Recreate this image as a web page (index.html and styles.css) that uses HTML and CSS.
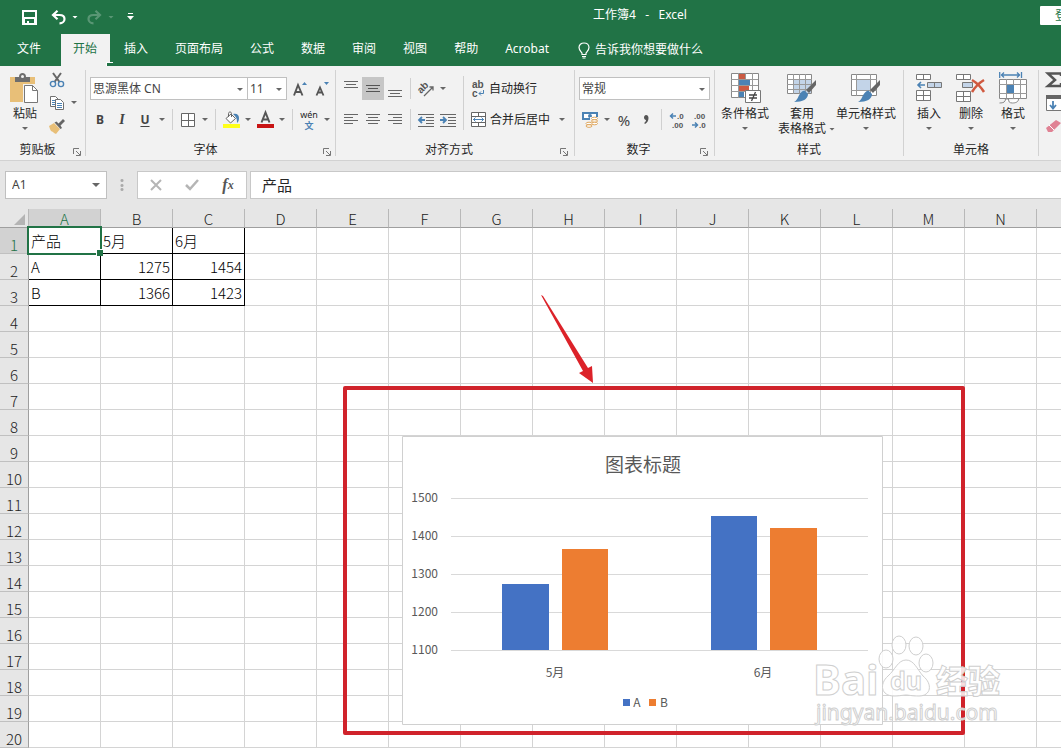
FILE: index.html
```html
<!DOCTYPE html>
<html lang="zh-CN">
<head>
<meta charset="utf-8">
<title>工作簿4 - Excel</title>
<link rel="stylesheet" href="styles.css">
</head>
<body>
<header class="titlebar">
  <div class="quick">
    <button class="qbtn" aria-label="保存"><svg width="15" height="15" viewBox="0 0 15 15"><path fill="#fff" fill-rule="evenodd" d="M0 0h15v15H0zM2 2v5h11V2zM3 9v4h2v-2h2v2h5V9z"/></svg></button>
    <button class="qbtn" aria-label="撤消"><svg width="15" height="15" viewBox="0 0 15 15"><path fill="none" stroke="#fff" stroke-width="2.2" d="M6.500 0.800L2 5l4.500 4.200M2 5h6.500c3 0 5 1.600 5 4s-2 4.300-5 4.300"/></svg></button>
    <button class="caret light" aria-label="撤消列表"></button>
    <button class="qbtn faded" aria-label="恢复"><svg width="15" height="15" viewBox="0 0 15 15"><path fill="none" stroke="#fff" stroke-width="2.200" d="M8.500 0.800L13 5l-4.500 4.200M13 5H6.500c-3 0-5 1.600-5 4s2 4.300 5 4.300"/></svg></button>
    <button class="caret light faded" aria-label="恢复列表"></button>
    <button class="qbtn" aria-label="自定义快速访问工具栏"><svg width="7" height="8" viewBox="0 0 7 8"><path fill="#fff" d="M1 0h5v1H1zM0 3h7L3.500 7z"/></svg></button>
  </div>
  <div class="doc-title">工作簿4 &nbsp;&nbsp;- &nbsp;&nbsp;Excel</div>
  <button class="login">登录</button>
</header>
<nav class="tabs">
  <button class="tab file">文件</button><button class="tab active">开始</button><button class="tab">插入</button><button class="tab">页面布局</button><button class="tab">公式</button><button class="tab">数据</button><button class="tab">审阅</button><button class="tab">视图</button><button class="tab">帮助</button><button class="tab">Acrobat</button>
  <button class="tell"><svg width="12" height="17" viewBox="0 0 12 17"><path fill="none" stroke="#fff" stroke-width="1.200" d="M4 12.500V11C2.500 9 1 7.800 1 5.500 1 3 3 1 6 1s5 2 5 4.500C11 7.800 9.500 9 8 11v1.500zM4 14.500h4M4.500 16h3"/></svg>告诉我你想要做什么</button>
</nav>

<section class="ribbon" aria-label="开始">
  <div class="group snug">
    <div class="body">
      <button class="big paste"><span class="pic"><svg width="30" height="32" viewBox="0 0 30 32"><path fill="#e8bf78" d="M0 5h25v25H0z"/><path fill="#6d6d6d" d="M5 10V5h4c0-3 1.500-4 3.500-4S16 2 16 5h4v5z"/><circle cx="12.500" cy="4.500" r="1.500" fill="#f2f2f2"/><path fill="#f2f2f2" d="M13 12h17v20H13z"/><path fill="#fff" stroke="#777" d="M14.500 13.500h8l5 5v12h-13z"/><path fill="none" stroke="#777" d="M22.500 13.500v5h5"/></svg></span>粘贴<span class="tri"></span></button>
      <div class="mini">
        <button class="ib" aria-label="剪切"><svg width="16" height="16" viewBox="0 0 16 16"><path fill="none" stroke="#666" stroke-width="2" d="M4 1l6.500 9M12 1L5.500 10"/><circle cx="4" cy="12" r="2.600" fill="none" stroke="#4b82b4" stroke-width="1.400"/><circle cx="12" cy="12" r="2.600" fill="none" stroke="#4b82b4" stroke-width="1.400"/></svg></button>
        <span class="row tight"><button class="ib" aria-label="复制"><svg width="16" height="16" viewBox="0 0 16 16"><path fill="#fff" stroke="#707070" d="M1.500 1.500h5l3 3v7h-8z"/><path stroke="#4b82b4" d="M3 5.500h4M3 7.500h4M3 9.500h4"/><path fill="#fff" stroke="#707070" d="M6.500 4.500h5l3 3v7h-8z"/><path stroke="#4b82b4" d="M8 8.500h5M8 10.500h5M8 12.500h5"/></svg></button><button class="caret" aria-label="复制选项"></button></span>
        <button class="ib" aria-label="格式刷"><svg width="16" height="16" viewBox="0 0 16 16"><path fill="#e8bf78" d="M0 8l5-3 6 6-4 5-2-1-1-1-2-1-1-2z"/><path fill="#666" d="M5.500 4.500l2-1 2 2L14 1l2 2-4.500 4.500 1.500 2.500-1.500 1z"/></svg></button>
      </div>
    </div>
    <div class="foot"><span>剪贴板</span><button class="launch" aria-label="剪贴板设置"><svg width="8" height="8" viewBox="0 0 8 8"><path fill="none" stroke="#777" d="M.5 6V.5H6M3 3l4 4M7.500 3v4.500H3"/></svg></button></div>
  </div>

  <div class="group snug">
    <div class="body stack">
      <div class="row">
        <label class="combo font-name"><select aria-label="字体"><option>思源黑体 CN</option></select></label><label class="combo font-size"><select aria-label="字号"><option>11</option></select></label>
        <button class="ib" aria-label="增大字号"><svg width="14" height="16" viewBox="0 0 14 16"><path fill="none" stroke="#555" stroke-width="1.900" d="M1 14.500L5 4 9.500 14.500M2.500 11h5.500"/><path fill="#4b82b4" d="M9 4l2.500-3L14 4z"/></svg></button><button class="ib" aria-label="减小字号"><svg width="14" height="16" viewBox="0 0 14 16"><path fill="none" stroke="#555" stroke-width="1.800" d="M1.500 14.500L5 6.500l3.500 8M3 11.500h4"/><path fill="#4b82b4" d="M9 1h5l-2.500 3z"/></svg></button>
      </div>
      <div class="row">
        <button class="ib n20 b">B</button><button class="ib n24 i">I</button><button class="ib u">U</button><button class="caret" aria-label="下划线选项"></button><i class="sep"></i>
        <button class="ib" aria-label="边框"><svg width="14" height="14" viewBox="0 0 14 14"><path fill="#fff" stroke="#666" d="M.5.5h13v13H.5zM7.500 0v14M0 7.500h14"/></svg></button><button class="caret" aria-label="边框选项"></button><i class="sep"></i>
        <button class="ib" aria-label="填充颜色"><svg width="17" height="17" viewBox="0 0 17 17"><path fill="#ffff1a" d="M0 13h17v4H0z"/><path fill="#fff" stroke="#666" d="M3 7.500L8 3l4.500 4.500L7.500 12z"/><path fill="none" stroke="#666" d="M5.500 6V2.500c0-2 3-2 3 0V6"/><path fill="#4b82b4" d="M10 3c4-1 6 1 6 4s-1 4-2 5c0-4 0-5-4-9z"/></svg></button><button class="caret" aria-label="填充颜色选项"></button>
        <button class="ib" aria-label="字体颜色"><svg width="17" height="17" viewBox="0 0 17 17"><path fill="#c81414" d="M0 13h17v4H0z"/><path fill="none" stroke="#555" stroke-width="2" d="M4.500 11.500l4-10 4 10M5.500 8.500h6"/></svg></button><button class="caret" aria-label="字体颜色选项"></button><i class="sep"></i>
        <button class="ib n24 pinyin" aria-label="拼音指南"><span>wén</span><b>文</b></button><button class="caret" aria-label="拼音选项"></button>
      </div>
    </div>
    <div class="foot"><span>字体</span><button class="launch" aria-label="字体设置"><svg width="8" height="8" viewBox="0 0 8 8"><path fill="none" stroke="#777" d="M.5 6V.5H6M3 3l4 4M7.500 3v4.500H3"/></svg></button></div>
  </div>

  <div class="group">
    <div class="body">
      <div class="stack">
        <div class="row">
          <button class="ib" aria-label="顶端对齐"><svg width="14" height="16" viewBox="0 0 14 16"><path stroke="#666" d="M0 .5h14M2 3.500h10M0 6.500h14"/></svg></button><button class="ib on" aria-label="垂直居中"><svg width="14" height="16" viewBox="0 0 14 16"><path stroke="#555" d="M0 4.500h14M2 7.500h10M0 10.500h14"/></svg></button><button class="ib" aria-label="底端对齐"><svg width="14" height="16" viewBox="0 0 14 16"><path stroke="#666" d="M0 9.500h14M2 12.500h10M0 15.500h14"/></svg></button><i class="sep"></i><button class="ib" aria-label="方向"><svg width="17" height="16" viewBox="0 0 17 16"><text class="glyph" x="0" y="10" transform="rotate(-45 5 8)">ab</text><path fill="none" stroke="#666" stroke-width="1.300" d="M6 15l9-9M11.500 6H15v3.500"/></svg></button><button class="caret" aria-label="方向选项"></button>
        </div>
        <div class="row">
          <button class="ib" aria-label="左对齐"><svg width="14" height="12" viewBox="0 0 14 12"><path stroke="#666" d="M0 .5h14M0 3.500h9M0 6.500h14M0 9.500h9"/></svg></button><button class="ib" aria-label="居中"><svg width="14" height="12" viewBox="0 0 14 12"><path stroke="#666" d="M0 .5h14M2 3.500h10M0 6.500h14M2 9.500h10"/></svg></button><button class="ib" aria-label="右对齐"><svg width="14" height="12" viewBox="0 0 14 12"><path stroke="#666" d="M0 .5h14M5 3.500h9M0 6.500h14M5 9.500h9"/></svg></button><i class="sep"></i><button class="ib" aria-label="减少缩进量"><svg width="16" height="14" viewBox="0 0 16 14"><path stroke="#666" d="M0 1.500h16M8 4.500h8M8 7.500h8M8 10.500h8M0 13.500h16"/><path fill="none" stroke="#4b82b4" stroke-width="1.800" d="M7 7H1M4 4L1 7l3 3"/></svg></button><button class="ib" aria-label="增加缩进量"><svg width="16" height="14" viewBox="0 0 16 14"><path stroke="#666" d="M0 1.500h16M8 4.500h8M8 7.500h8M8 10.500h8M0 13.500h16"/><path fill="none" stroke="#4b82b4" stroke-width="1.800" d="M0 7h6M3 4l3 3-3 3"/></svg></button>
        </div>
      </div>
      <i class="sep tall"></i>
      <div class="stack wrap-merge">
        <div class="row"><button class="wide"><svg width="14" height="18" viewBox="0 0 14 18"><text class="glyph" x="1" y="8">ab</text><text class="glyph" x="1" y="17">c</text><path fill="none" stroke="#4b82b4" d="M12.500 10v3.500H8M10 11.500l-2 2 2 2"/></svg>自动换行</button></div>
        <div class="row"><button class="wide"><svg width="15" height="15" viewBox="0 0 15 15"><path fill="#fff" stroke="#666" d="M.5.5h14v14H.5z"/><path fill="none" stroke="#666" d="M0 4.500h15M0 10.500h15M7.500 0v4M7.500 11v4"/><path fill="none" stroke="#4b82b4" d="M2 7.500h11M4.500 5.500l-2 2 2 2M10.500 5.500l2 2-2 2"/></svg>合并后居中</button><button class="caret spaced" aria-label="合并选项"></button></div>
      </div>
    </div>
    <div class="foot"><span>对齐方式</span><button class="launch" aria-label="对齐设置"><svg width="8" height="8" viewBox="0 0 8 8"><path fill="none" stroke="#777" d="M.5 6V.5H6M3 3l4 4M7.500 3v4.500H3"/></svg></button></div>
  </div>

  <div class="group">
    <div class="body stack">
      <div class="row"><label class="combo number"><select aria-label="数字格式"><option>常规</option></select></label></div>
      <div class="row">
        <button class="ib" aria-label="会计数字格式"><svg width="17" height="17" viewBox="0 0 17 17"><path fill="#4b82b4" d="M0 1h16v8H0z"/><path fill="#fff" d="M2 3h12v4H2z"/><circle cx="8" cy="5" r="2" fill="#4b82b4"/><path fill="#f2f2f2" d="M8 6h8v4H8zM3 10h12v7H3z"/><g fill="#fff" stroke="#dfa65c"><ellipse cx="12.500" cy="7.500" rx="3" ry="1.300"/><ellipse cx="12.500" cy="10" rx="3" ry="1.300"/><ellipse cx="12.500" cy="12.500" rx="3" ry="1.300"/><ellipse cx="7" cy="12.500" rx="3" ry="1.300"/><ellipse cx="7" cy="15" rx="3" ry="1.300"/></g></svg></button><button class="caret" aria-label="会计格式选项"></button><button class="ib pct">%</button><button class="ib" aria-label="千位分隔样式"><svg width="6" height="9" viewBox="0 0 6 9"><path fill="#555" d="M1 2.500C1 1 2 0 3 0c1.500 0 2.500 1 2.500 3 0 3-1.500 5-3.500 6l-.8-1C2.500 7 3 6 3 5 2 5 1 4 1 2.500z"/></svg></button><i class="sep"></i><button class="ib" aria-label="增加小数位数"><svg width="16" height="16" viewBox="0 0 16 16"><text class="dec" x="8" y="7">.0</text><text class="dec" x="3" y="16">.00</text><path fill="none" stroke="#4b82b4" stroke-width="1.500" d="M7 4H1.500M4 1.500L1.500 4 4 6.500"/></svg></button><button class="ib" aria-label="减少小数位数"><svg width="16" height="16" viewBox="0 0 16 16"><text class="dec" x="3" y="7">.00</text><text class="dec" x="8" y="16">.0</text><path fill="none" stroke="#4b82b4" stroke-width="1.500" d="M1 13h5.500M4 10.500L6.500 13 4 15.500"/></svg></button>
      </div>
    </div>
    <div class="foot"><span>数字</span><button class="launch" aria-label="数字设置"><svg width="8" height="8" viewBox="0 0 8 8"><path fill="none" stroke="#777" d="M.5 6V.5H6M3 3l4 4M7.500 3v4.500H3"/></svg></button></div>
  </div>

  <div class="group">
    <div class="body">
      <button class="big w52"><span class="pic"><svg width="31" height="31" viewBox="0 0 31 31"><path fill="#fff" stroke="#888" d="M1.500.5h27v24h-27z"/><path fill="none" stroke="#999" d="M1 6.500h27M1 12.500h27M1 18.500h27M8.500 0v25M15.500 0v25M22.500 0v25"/><path fill="#cb5a42" d="M9 1h6v5H9zM9 13h10v5H9z"/><path fill="#4b82b4" d="M9 7h11v5H9zM9 19h5v5H9z"/><path fill="#fff" stroke="#777" d="M15.500 17.500h15v12h-15z"/><path fill="none" stroke="#444" stroke-width="1.300" d="M19 22h8M19 25h8M25.500 19l-4 9"/></svg></span>条件格式<span class="tri"></span></button>
      <button class="big w62"><span class="pic"><svg width="30" height="29" viewBox="0 0 30 29"><path fill="#fff" stroke="#888" d="M.5.500h24v19H.5z"/><path fill="#c3d4e8" d="M7 5h17v14H7z"/><path fill="none" stroke="#999" d="M0 5.500h25M0 10.500h25M0 15.500h25M6.500 0v20M12.500 0v20M18.500 0v20"/><path fill="#666" d="M29 6v5l-7 8-3-3z"/><path fill="#4b82b4" d="M17.500 16.500l3.500 3.500c0 5-5 8-14 8 5-2 4-10 10.500-11.500z"/></svg></span>套用<span class="line2">表格格式<span class="tri side"></span></span></button>
      <button class="big w66"><span class="pic"><svg width="30" height="29" viewBox="0 0 30 29"><path fill="#fff" stroke="#888" d="M.5.500h25v21H.5z"/><path fill="none" stroke="#999" d="M0 5.500h26M0 16.500h26M5.500 0v22M19.500 0v22"/><path fill="#c3d4e8" d="M6 6h13v10H6z"/><path fill="#666" d="M29 6v5l-7 8-3-3z"/><path fill="#4b82b4" d="M17.500 16.500l3.500 3.500c0 5-5 8-14 8 5-2 4-10 10.500-11.500z"/></svg></span>单元格样式<span class="tri"></span></button>
    </div>
    <div class="foot"><span>样式</span></div>
  </div>

  <div class="group">
    <div class="body">
      <button class="big w42"><span class="pic"><svg width="27" height="28" viewBox="0 0 27 28"><path fill="#fff" stroke="#777" d="M.5.500h14v5H.5zM7.500.5v5M.5 16.500h14v10H.5zM7.500 16.500v10M.5 21.500h14"/><path fill="#c3d4e8" stroke="#777" d="M11.500 8.500h14v5h-14zM18.500 8.500v5"/><path fill="none" stroke="#4b82b4" stroke-width="1.600" d="M9 11H2M5 8l-3 3 3 3"/></svg></span>插入<span class="tri"></span></button>
      <button class="big w42"><span class="pic"><svg width="30" height="28" viewBox="0 0 30 28"><path fill="#fff" stroke="#777" d="M.5.500h14v5H.5zM7.500.5v5M.5 17.500h14v10H.5zM7.500 17.500v10M.5 22.500h14"/><path fill="#c3d4e8" stroke="#777" d="M6.500 8.500h10v5h-10z"/><path fill="none" stroke="#d0593f" stroke-width="2.500" d="M16 6c5 3 9 7 12 12M28 6c-5 3-9 7-12 12"/></svg></span>删除<span class="tri"></span></button>
      <button class="big w42"><span class="pic"><svg width="28" height="32" viewBox="0 0 28 32"><path fill="none" stroke="#4b82b4" stroke-width="1.300" d="M.7 0v6M22.500 0v6M2 3h19M5 .5L2.500 3 5 5.500M18 .5L20.500 3 18 5.500"/><path fill="#fff" stroke="#888" d="M.5 7.500h27v19H.5z"/><path fill="none" stroke="#999" d="M0 12.500h28M0 21.500h28M7.500 7v20M14.500 7v20M21.500 7v20"/><path fill="#4b82b4" d="M8 13h7v8H8z"/><path fill="#fff" stroke="#888" d="M.5 31c4 0 6-1 6-4h3c0 3 1 4 4 4s6-1 6-4"/></svg></span>格式<span class="tri"></span></button>
    </div>
    <div class="foot"><span>单元格</span></div>
  </div>

  <div class="group last">
    <div class="mini">
      <button class="ib" aria-label="自动求和"><svg width="16" height="16" viewBox="0 0 16 16"><path fill="none" stroke="#555" stroke-width="2.500" d="M15 4V1.500H2L9 8l-7 6h13v-3"/></svg></button>
      <button class="ib" aria-label="填充"><svg width="16" height="16" viewBox="0 0 16 16"><path fill="#fff" stroke="#777" d="M.5.500h15v15H.5z"/><path fill="#666" d="M0 0h16v4H0z"/><path fill="none" stroke="#4b82b4" stroke-width="1.800" d="M7 6v7M4 10l3 3.500 3-3.500"/></svg></button>
      <button class="ib" aria-label="清除"><svg width="16" height="16" viewBox="0 0 16 16"><path fill="#e08294" d="M0 10L10 2l5 3-9 9H2z"/><path stroke="#fff" d="M3 7l5 5"/></svg></button>
    </div>
  </div>
</section>

<section class="formula-bar">
  <label class="combo name-box"><input aria-label="名称框" value="A1"></label>
  <span class="dots"></span>
  <div class="fx-box">
    <button aria-label="取消"><svg width="12" height="12" viewBox="0 0 12 12"><path stroke="#b5b5b5" stroke-width="2" d="M1 1l10 10M11 1L1 11"/></svg></button>
    <button aria-label="输入"><svg width="14" height="12" viewBox="0 0 14 12"><path fill="none" stroke="#b5b5b5" stroke-width="2.500" d="M1 6l4 4 8-9"/></svg></button>
    <button class="fx" aria-label="插入函数">f<sub>x</sub></button>
  </div>
  <input class="formula" aria-label="编辑栏" value="产品">
</section>

<main class="sheet">
  <table class="grid">
    <colgroup><col class="rowhead"><col span="15"></colgroup>
    <thead><tr><th class="corner"><svg width="11" height="11" viewBox="0 0 11 11"><path fill="#b4b4b4" d="M11 0v11H0z"/></svg></th><th class="sel">A</th><th>B</th><th>C</th><th>D</th><th>E</th><th>F</th><th>G</th><th>H</th><th>I</th><th>J</th><th>K</th><th>L</th><th>M</th><th>N</th><th>O</th></tr></thead>
    <tbody>
      <tr><th class="sel">1</th><td class="d active">产品</td><td class="d">5月</td><td class="d">6月</td><td><td><td><td><td><td><td><td><td><td><td><td></tr>
      <tr><th>2</th><td class="d">A</td><td class="d num">1275</td><td class="d num">1454</td><td><td><td><td><td><td><td><td><td><td><td><td></tr>
      <tr><th>3</th><td class="d">B</td><td class="d num">1366</td><td class="d num">1423</td><td><td><td><td><td><td><td><td><td><td><td><td></tr>
      <tr><th>4</th><td><td><td><td><td><td><td><td><td><td><td><td><td><td><td></tr>
      <tr><th>5</th><td><td><td><td><td><td><td><td><td><td><td><td><td><td><td></tr>
      <tr><th>6</th><td><td><td><td><td><td><td><td><td><td><td><td><td><td><td></tr>
      <tr><th>7</th><td><td><td><td><td><td><td><td><td><td><td><td><td><td><td></tr>
      <tr><th>8</th><td><td><td><td><td><td><td><td><td><td><td><td><td><td><td></tr>
      <tr><th>9</th><td><td><td><td><td><td><td><td><td><td><td><td><td><td><td></tr>
      <tr><th>10</th><td><td><td><td><td><td><td><td><td><td><td><td><td><td><td></tr>
      <tr><th>11</th><td><td><td><td><td><td><td><td><td><td><td><td><td><td><td></tr>
      <tr><th>12</th><td><td><td><td><td><td><td><td><td><td><td><td><td><td><td></tr>
      <tr><th>13</th><td><td><td><td><td><td><td><td><td><td><td><td><td><td><td></tr>
      <tr><th>14</th><td><td><td><td><td><td><td><td><td><td><td><td><td><td><td></tr>
      <tr><th>15</th><td><td><td><td><td><td><td><td><td><td><td><td><td><td><td></tr>
      <tr><th>16</th><td><td><td><td><td><td><td><td><td><td><td><td><td><td><td></tr>
      <tr><th>17</th><td><td><td><td><td><td><td><td><td><td><td><td><td><td><td></tr>
      <tr><th>18</th><td><td><td><td><td><td><td><td><td><td><td><td><td><td><td></tr>
      <tr><th>19</th><td><td><td><td><td><td><td><td><td><td><td><td><td><td><td></tr>
      <tr><th>20</th><td><td><td><td><td><td><td><td><td><td><td><td><td><td><td></tr>
    </tbody>
  </table>

  <svg class="chart" width="481" height="289" viewBox="0 0 481 289" role="img" aria-label="图表标题">
    <path fill="#fff" stroke="#d0d0d0" d="M.5.500h480v288H.5z"/>
    <text class="ct" x="241" y="36" text-anchor="middle">图表标题</text>
    <path stroke="#d9d9d9" d="M49 62.500h417M49 100.500h417M49 138.500h417M49 176.500h417M49 214.500h417"/>
    <g class="ax" text-anchor="end"><text x="36" y="66">1500</text><text x="36" y="104">1400</text><text x="36" y="142">1300</text><text x="36" y="180">1200</text><text x="36" y="218">1100</text></g>
    <path fill="#4472c4" d="M100 148h47v66h-47zM309 80h46v134h-46zM221 263h7v7h-7z"/>
    <path fill="#ed7d31" d="M160 113h46v101h-46zM368 92h47v122h-47zM247 263h7v7h-7z"/>
    <g class="ax" text-anchor="middle"><text x="153" y="241">5月</text><text x="361" y="241">6月</text><text x="235" y="271">A</text><text x="262" y="271">B</text></g>
  </svg>

  <div class="frame"></div>
  <svg class="arrow" width="54" height="90" viewBox="0 0 54 90"><path fill="#dc2229" d="M0 0l2 1 45 72 4-2 1 17-14-10 4-2z"/></svg>

  <svg class="mark" width="196" height="96" viewBox="0 0 196 96" aria-label="Baidu 经验">
    <g fill="#fff" fill-opacity=".85" stroke="#cfcfcf" stroke-width="1">
      <text class="wb" x="1" y="62">Bai</text>
      <ellipse cx="74" cy="26" rx="7" ry="9"/><ellipse cx="87" cy="12" rx="7" ry="9"/><ellipse cx="104" cy="13" rx="7" ry="9"/><ellipse cx="114" cy="30" rx="7" ry="9"/>
      <path d="M94 27c8 0 11 9 17 16 10 8 8 20-4 20-8 0-10-1-13-1s-6 1-12 1c-13 0-15-12-6-20 7-6 10-16 18-16z"/>
      <text class="wd" x="78" y="57">du</text>
      <text class="wc" x="124" y="60">经验</text>
      <text class="wu" x="4" y="87">jingyan.baidu.com</text>
    </g>
  </svg>
</main>
</body>
</html>
```
FILE: styles.css
```css
* { box-sizing: border-box; }
body {
  margin: 0;
  height: 100vh;
  display: flex;
  flex-direction: column;
  overflow: hidden;
  font: 12px/16px "Noto Sans", "Noto Sans CJK SC", sans-serif;
  color: #262626;
  background: #fff;
}
button, select, input { font: inherit; color: inherit; margin: 0; padding: 0; border: 0; background: none; border-radius: 0; }
button { display: flex; align-items: center; justify-content: center; flex: none; white-space: nowrap; }
svg { display: block; flex: none; overflow: visible; }

/* Title bar */
.titlebar { display: flex; align-items: center; height: 34px; flex: none; overflow: hidden; background: #217346; color: #fff; }
.quick { display: flex; align-items: center; flex: none; width: 140px; padding-left: 18px; }
.qbtn { width: 22px; height: 22px; }
.quick .qbtn + .qbtn { margin-left: 7px; }
.quick .caret + .qbtn { margin-left: 2px; }
.faded { opacity: .25; }
.doc-title { flex: 1; padding: 0 0 4px 100px; text-align: center; }
.login { width: 54px; height: 19px; margin-right: -33px; margin-bottom: 3px; background: #fff; color: #217346; border-radius: 1px; }

/* Ribbon tabs */
.tabs { display: flex; gap: 3px; height: 32px; flex: none; padding-left: 5px; overflow: hidden; background: #217346; color: #fff; }
.tab { padding: 0 12px 2px; }
.file { margin-right: 5px; }
.tab.active { padding-right: 13px; margin-right: -1px; background: #f2f2f2; color: #217346; }
.tell { gap: 5px; margin-left: 14px; }

/* Ribbon */
.ribbon { display: flex; flex: none; height: 95px; padding: 4px 0; overflow: hidden; background: #f2f2f2; border-bottom: 1px solid #d2d2d2; }
.group { display: flex; flex-direction: column; flex: none; padding: 0 4px; border-right: 1px solid #d2d2d2; }
.group.snug { padding-right: 2px; }
.group.last { border: 0; }
.body { display: flex; flex: 1; }
.stack { display: flex; flex-direction: column; gap: 8px; padding-top: 7px; }
.row { display: flex; height: 23px; align-items: center; }
.foot { display: flex; height: 17px; }
.foot span { flex: 1; padding-top: 3px; text-align: center; }
.launch { width: 12px; height: 26px; }
.ib { width: 22px; height: 23px; }
.ib.n20 { width: 20px; }
.ib.n24 { width: 24px; }
.ib.on { background: #c6c6c6; }
.b, .u, .i { color: #444; font-weight: 700; }
.i { font-style: italic; font-family: "Liberation Serif", serif; font-size: 14px; }
.u { text-decoration: underline; text-underline-offset: 2px; }
.pct { font-size: 15px; color: #444; }
.caret { width: 12px; height: 22px; color: #666; }
.caret::after, .tri, .combo::after { content: ""; width: 6px; height: 3px; background: #666; clip-path: polygon(0 0, 100% 0, 50% 100%); }
.caret.light::after { background: #fff; }
.caret.spaced { margin-left: 6px; }
.sep { width: 9px; height: 21px; background: linear-gradient(#d0d0d0, #d0d0d0) center / 1px 100% no-repeat; }
.sep.tall { height: 54px; margin-top: 6px; }
.wrap-merge { margin-right: 2px; }
.pinyin { flex-direction: column; font: 9px/12px "Noto Sans", "Noto Sans CJK SC", sans-serif; }
.pinyin b { color: #4b82b4; font-size: 9px; line-height: 10px; }
.glyph { font: 700 10px "Liberation Sans", sans-serif; fill: #555; }
.dec { font: 700 8px "Liberation Sans", sans-serif; fill: #555; }
.wide { gap: 4px; padding-left: 3px; }
.combo { position: relative; display: flex; height: 23px; background: #fff; border: 1px solid #c0c0c0; }
.combo::after { position: absolute; right: 4px; top: 10px; pointer-events: none; }
.combo select, .combo input { width: 100%; padding: 0 2px; appearance: none; outline: 0; color: #444; }
.font-name { width: 158px; }
.font-size { width: 40px; margin-left: -1px; margin-right: 2px; }
.number { width: 131px; }
.mini { display: flex; flex-direction: column; margin-top: -2px; }
.tight { width: 37px; }
.big { flex-direction: column; justify-content: flex-start; line-height: 16px; }
.pic { display: flex; align-items: center; justify-content: center; height: 36px; }
.tri { margin-top: 5px; }
.tri.side { margin: 0 -9px 0 3px; }
.line2 { display: flex; align-items: center; line-height: 14px; }
.paste { width: 42px; }
.w52 { width: 52px; }
.w62 { width: 62px; }
.w66 { width: 66px; }
.w42 { width: 42px; }

/* Formula bar */
.formula-bar { display: flex; flex: none; height: 48px; padding: 10px 0 10px 5px; background: #e6e6e6; }
.formula-bar .combo { width: 102px; height: 28px; }
.formula-bar .combo::after { width: 8px; height: 4px; right: 6px; top: 11px; }
.formula-bar .combo input { padding-left: 6px; }
.dots { width: 30px; background: radial-gradient(circle, #aaa 1px, transparent 2px) center / 4px 5px no-repeat, radial-gradient(circle, #aaa 1px, transparent 2px) center 7px / 4px 5px no-repeat, radial-gradient(circle, #aaa 1px, transparent 2px) center 16px / 4px 5px no-repeat; }
.fx-box { display: flex; width: 110px; background: #fff; border: 1px solid #c8c8c8; }
.fx-box button { flex: 1; }
.fx-box .fx { font: italic 700 16px "Liberation Serif", serif; color: #555; }
.fx sub { font-size: 12px; }
.formula { flex: 1; min-width: 0; margin-left: 3px; padding: 0 0 2px 11px; background: #fff; border: 1px solid #c8c8c8; border-right: 0; font: 15px "Noto Sans CJK SC", sans-serif; outline: 0; }

/* Worksheet */
.sheet { position: relative; flex: 1; overflow: hidden; }
.grid { width: 1109px; table-layout: fixed; border-collapse: separate; border-spacing: 0; font: 15px/17px "Noto Sans CJK SC", sans-serif; color: #000; }
.rowhead { width: 29px; }
.grid th, .grid td { padding: 0 2px; height: 26px; border-right: 1px solid #d4d4d4; border-bottom: 1px solid #d4d4d4; }
.grid th { padding: 8px 0 0; background: #e6e6e6; font-weight: 300; color: #222; border-right-color: #9f9f9f; border-bottom-color: #c0c0c0; }
.grid thead th { height: 19px; padding: 2px 0 0; line-height: 16px; border-right-color: #b8b8b8; border-bottom-color: #9f9f9f; }
.grid th.sel { background: #d2d2d2; color: #217346; }
.grid .corner svg { margin-left: 14px; }
.grid td.d { border-color: #000; font-weight: 300; }
.grid td.num { text-align: right; }
.active { position: relative; }
.active::before { content: ""; position: absolute; inset: -2px; border: 2px solid #217346; }
.active::after { content: ""; position: absolute; right: -3px; bottom: -3px; width: 6px; height: 6px; background: #217346; border: 1px solid #fff; border-width: 1px 0 0 1px; }

/* Objects floating over the worksheet */
.chart { position: absolute; left: 402px; top: 227px; }
.ct { font: 19px "Noto Sans CJK SC", sans-serif; fill: #595959; }
.ax { font: 12px "Noto Sans CJK SC", sans-serif; fill: #595959; }
.frame { position: absolute; left: 343px; top: 177px; width: 622px; height: 349px; border: 4px solid #d0232b; border-radius: 2px; }
.arrow { position: absolute; left: 541px; top: 86px; }
.mark { position: absolute; left: 812px; top: 424px; }
.wb { font: 700 42px "Noto Sans", sans-serif; }
.wd { font: 700 25px "Noto Sans", sans-serif; }
.wc { font: 900 32px "Noto Sans CJK SC", sans-serif; }
.wu { font: 21px "Noto Sans", sans-serif; }
```
